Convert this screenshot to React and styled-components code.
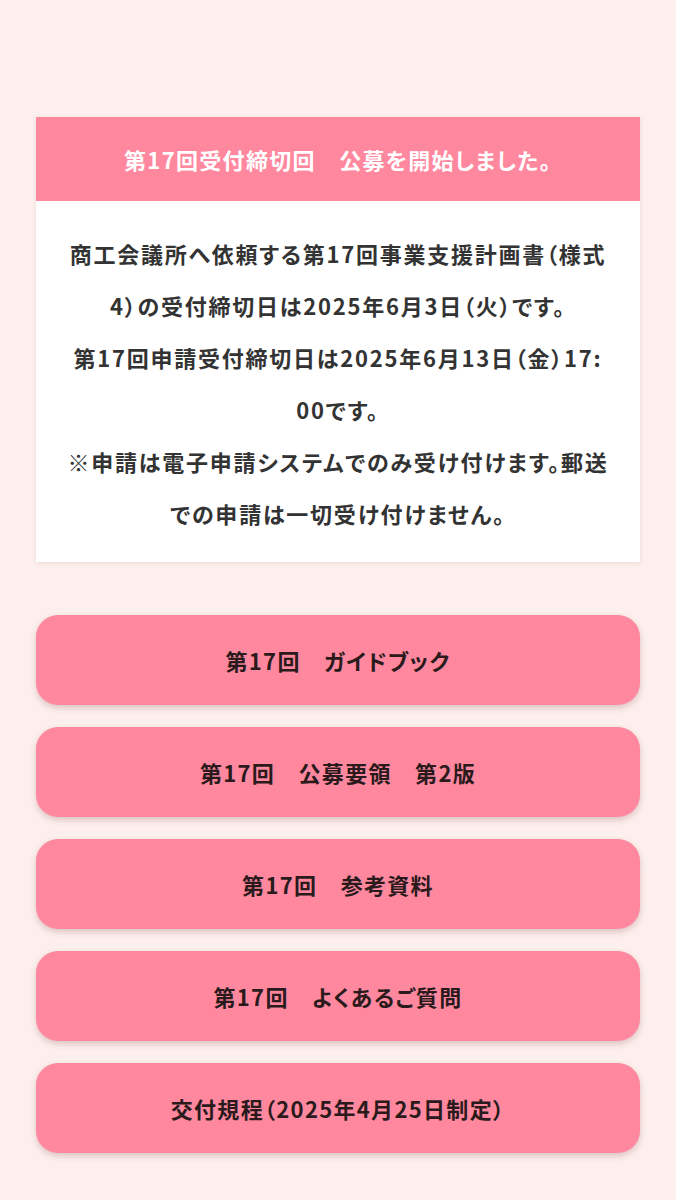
import React from "react";
import styled, { createGlobalStyle } from "styled-components";

const Global = createGlobalStyle`
  html, body { margin: 0; padding: 0; background: #fdefed; }
  body {
    font-family: "Noto Sans CJK JP", "Noto Sans", sans-serif;
    font-feature-settings: "palt";
  }
`;

const Page = styled.main`
  min-height: 1200px;
  box-sizing: border-box;
  padding: 117px 36px 40px;
  display: flex;
  flex-direction: column;
  background: #fdefed;
`;

const Notice = styled.section`
  background: #fff;
  box-shadow: 0 1px 4px rgba(120, 60, 60, 0.12);
`;

const NoticeHeader = styled.h2`
  margin: 0;
  height: 84px;
  display: flex;
  align-items: center;
  justify-content: center;
  background: #ff889f;
  color: #fff;
  font-size: 22px;
  font-weight: 700;
  letter-spacing: 0.06em;
`;

const NoticeBody = styled.div`
  padding: 26px 30px 23px;
  text-align: center;
  color: #333;
  font-size: 22px;
  font-weight: 700;
  line-height: 52px;
  letter-spacing: 0.08em;
`;

const Para = styled.p`
  margin: 0;
`;

const LinkList = styled.nav`
  margin-top: 53px;
  display: flex;
  flex-direction: column;
  gap: 22px;
`;

const LinkButton = styled.a`
  height: 90px;
  display: flex;
  align-items: center;
  justify-content: center;
  background: #ff889f;
  border-radius: 22px;
  box-shadow: 0 3px 6px rgba(110, 40, 50, 0.22);
  color: #2a1a1c;
  font-size: 22px;
  font-weight: 700;
  letter-spacing: 0.06em;
  text-decoration: none;
`;

const links = [
  "第17回　ガイドブック",
  "第17回　公募要領　第2版",
  "第17回　参考資料",
  "第17回　よくあるご質問",
  "交付規程（2025年4月25日制定）",
];

export default function App() {
  return (
    <>
      <Global />
      <Page>
        <Notice>
          <NoticeHeader>第17回受付締切回　公募を開始しました。</NoticeHeader>
          <NoticeBody>
            <Para>
              商工会議所へ依頼する第17回事業支援計画書（様式4）の受付締切日は2025年6月3日（火）です。
            </Para>
            <Para>
              第17回申請受付締切日は2025年6月13日（金）17:<wbr />00です。
            </Para>
            <Para>
              ※申請は電子申請システムでのみ受け付けます。郵送での申請は一切受け付けません。
            </Para>
          </NoticeBody>
        </Notice>
        <LinkList>
          {links.map((t) => (
            <LinkButton key={t} href="#">
              {t}
            </LinkButton>
          ))}
        </LinkList>
      </Page>
    </>
  );
}
